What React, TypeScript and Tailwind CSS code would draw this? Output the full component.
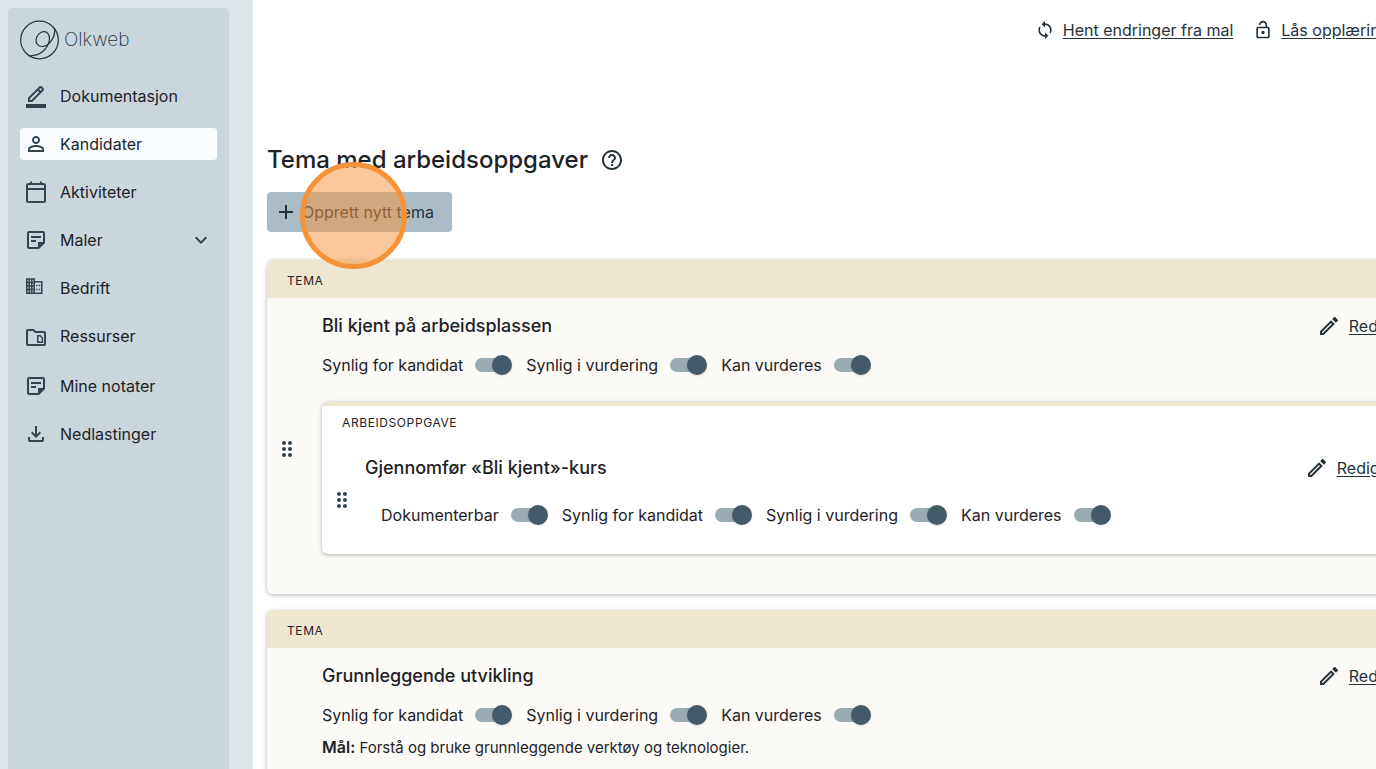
import React from 'react';
import {
    MdAdd,
    MdDragIndicator,
    MdExpandMore,
    MdHelpOutline,
    MdOutlineEdit,
    MdOutlineLockOpen,
    MdOutlineStickyNote2,
    MdPersonOutline,
    MdSync
} from 'react-icons/md';

interface IconProps {
    className?: string;
}

const BorderColorIcon: React.FC<IconProps> = ({ className }) => (
    <svg viewBox="0 -960 960 960" fill="currentColor" className={className}>
        <path d="M80 0v-160h800V0H80Zm160-320h56l312-311-29-29-28-28-311 312v56Zm-80 80v-170l448-447q11-11 25.500-17t30.500-6q16 0 31 6t27 18l55 56q12 11 17.500 26t5.500 31q0 15-5.500 29.500T777-687L330-240H160Zm504-448 56-56-56-56-56 56 56 56Z" />
    </svg>
);

const CalendarIcon: React.FC<IconProps> = ({ className }) => (
    <svg viewBox="0 0 24 24" fill="none" stroke="currentColor" strokeWidth="2" className={className}>
        <rect x="3" y="4" width="18" height="18" rx="1.5" />
        <path d="M3 9h18M7 1.500v3M17 1.500v3" />
    </svg>
);

const DownloadIcon: React.FC<IconProps> = ({ className }) => (
    <svg viewBox="0 -960 960 960" fill="currentColor" className={className}>
        <path d="M480-320 280-520l56-58 104 104v-326h80v326l104-104 56 58-200 200ZM240-160q-33 0-56.500-23.500T160-240v-120h80v120h480v-120h80v120q0 33-23.500 56.500T720-160H240Z" />
    </svg>
);

const FolderIcon: React.FC<IconProps> = ({ className }) => (
    <svg viewBox="0 0 24 24" fill="none" stroke="currentColor" className={className}>
        <path strokeWidth="2" d="M4 6h5.400l2 2H20a1 1 0 0 1 1 1v11a1 1 0 0 1-1 1H4a1 1 0 0 1-1-1V7a1 1 0 0 1 1-1z" />
        <path strokeWidth="1.500" d="M13.750 11.750h2.600l2 2.200v4.300h-4.600z" />
    </svg>
);

const BuildingIcon: React.FC<IconProps> = ({ className }) => (
    <svg viewBox="0 0 24 24" fill="none" stroke="currentColor" strokeWidth="1.500" className={className}>
        <path d="M2.750 3h7.500v14.250h-7.500zM2.750 6.500h7.500M2.750 10h7.500M2.750 13.500h7.500M5.250 3v14.250M7.750 3v14.250M10.250 5.750h7.500v11.500h-7.500" />
        <path d="M12 9.500h1.500M14.800 9.500h1.500M12 13.500h1.500M14.800 13.500h1.500" />
    </svg>
);

const Logo: React.FC = () => (
    <a href="#" aria-label="Olkweb" className="flex items-center gap-1 text-[#24323b]">
        <svg viewBox="0 0 40 40" fill="none" stroke="currentColor" strokeWidth="1.200" className="size-10">
            <circle cx="19.500" cy="20" r="18.800" />
            <path d="M34.500 8C36 17 29 26.500 22 26.500C18 26.500 15.700 23 16 20C16.500 15.500 20 11.700 24 11.700C27.500 11.700 29.800 15 29.500 19C28.500 28 21 36.500 8.500 35.700" />
        </svg>
        <span className="text-[19px] font-extralight">Olkweb</span>
    </a>
);

const mainItems = [
    { label: 'Dokumentasjon', icon: BorderColorIcon },
    { label: 'Kandidater', icon: MdPersonOutline, active: true },
    { label: 'Aktiviteter', icon: CalendarIcon },
    { label: 'Maler', icon: MdOutlineStickyNote2, expandable: true },
    { label: 'Bedrift', icon: BuildingIcon },
    { label: 'Ressurser', icon: FolderIcon }
];

const personalItems = [
    { label: 'Mine notater', icon: MdOutlineStickyNote2 },
    { label: 'Nedlastinger', icon: DownloadIcon }
];

interface NavItemProps {
    label: string;
    icon: React.ElementType;
    active?: boolean;
    expandable?: boolean;
}

const NavItem: React.FC<NavItemProps> = ({ label, icon: Icon, active, expandable }) => (
    <a href="#" className={`flex h-8 items-center rounded px-1 text-[#1d2226] ${active ? 'bg-[#f8fcff]' : ''}`}>
        <Icon className="size-6 text-[#33444f]" />
        <span className="ml-3 flex-1">{label}</span>
        {expandable && <MdExpandMore className="size-6 text-[#33444f]" />}
    </a>
);

const Sidebar: React.FC = () => (
    <aside className="w-[253px] shrink-0 bg-[#dce5ea] pl-2 pr-6 pt-2">
        <div className="h-full rounded-t bg-[#cbd6dc] px-3 pt-3">
            <Logo />
            <nav className="mt-5 flex flex-col gap-[18px]">
                <div className="flex flex-col gap-4">
                    {mainItems.map((item) => (
                        <NavItem key={item.label} {...item} />
                    ))}
                </div>
                <div className="flex flex-col gap-4">
                    {personalItems.map((item) => (
                        <NavItem key={item.label} {...item} />
                    ))}
                </div>
            </nav>
        </div>
    </aside>
);

const Toggle: React.FC<{ label: string }> = ({ label }) => (
    <label className="flex items-center gap-3 whitespace-nowrap">
        {label}
        <input
            type="checkbox"
            role="switch"
            defaultChecked
            className="flex h-5 w-[37px] shrink-0 appearance-none items-center before:h-[14px] before:w-[34px] before:shrink-0 before:rounded-full before:bg-[#9aabb2] after:-ml-[17px] after:size-5 after:shrink-0 after:rounded-full after:bg-[#455a68] after:shadow-sm"
        />
    </label>
);

const EditLink: React.FC = () => (
    <a href="#" className="flex shrink-0 items-center gap-2 text-[#24323b]">
        <MdOutlineEdit className="size-6" />
        <span className="underline underline-offset-2">Rediger</span>
    </a>
);

const DragHandle: React.FC<{ label: string }> = ({ label }) => (
    <button type="button" aria-label={label} className="flex w-10 shrink-0 items-center justify-center text-[#33444f]">
        <MdDragIndicator className="size-6" />
    </button>
);

interface ThemeCardProps {
    title: string;
    goal?: string;
    children?: React.ReactNode;
}

const ThemeCard: React.FC<ThemeCardProps> = ({ title, goal, children }) => (
    <section className="rounded-md bg-[#fcfaf6] shadow-[0_1px_4px_rgba(0,0,0,0.3)]">
        <div className="flex h-[38px] items-center rounded-t-md bg-[#ede6d1] px-5 pt-1 text-xs tracking-wider">TEMA</div>
        <div className="flex min-h-[296px]">
            <div className="flex pt-[6px]">
                <DragHandle label="Flytt tema" />
            </div>
            <div className="min-w-0 flex-1 pb-10 pl-[15px] pt-4">
                <div className="flex items-center justify-between pr-[23px]">
                    <h2 className="text-lg font-medium leading-6">{title}</h2>
                    <EditLink />
                </div>
                <div className="mt-[15px] flex gap-[14px]">
                    <Toggle label="Synlig for kandidat" />
                    <Toggle label="Synlig i vurdering" />
                    <Toggle label="Kan vurderes" />
                </div>
                {goal && (
                    <p className="mt-2 text-[15px] leading-6">
                        <strong className="text-base font-semibold">Mål:</strong> {goal}
                    </p>
                )}
                {children}
            </div>
        </div>
    </section>
);

const TaskCard: React.FC<{ title: string }> = ({ title }) => (
    <article className="mt-[25px] rounded-md border-t-4 border-[#ede6d1] bg-white shadow-[0_1px_4px_rgba(0,0,0,0.3)]">
        <div className="h-10 px-5 pt-[7px] text-xs leading-5 tracking-wider">ARBEIDSOPPGAVE</div>
        <div className="flex">
            <DragHandle label="Flytt arbeidsoppgave" />
            <div className="min-w-0 flex-1 pb-[27px] pl-[3px] pt-[10px]">
                <div className="flex items-center justify-between pr-[35px]">
                    <h3 className="text-lg font-medium leading-6">{title}</h3>
                    <EditLink />
                </div>
                <div className="mt-[23px] flex gap-[14px] pl-4">
                    <Toggle label="Dokumenterbar" />
                    <Toggle label="Synlig for kandidat" />
                    <Toggle label="Synlig i vurdering" />
                    <Toggle label="Kan vurderes" />
                </div>
            </div>
        </div>
    </article>
);

export default function App() {
    return (
        <div className="flex h-screen overflow-hidden bg-white font-['Inter','Liberation_Sans',sans-serif] text-base text-[#1d2226]">
            <Sidebar />
            <main className="min-w-0 flex-1 overflow-hidden pl-[14px]">
                <div className="-mr-[54px]">
                    <div className="flex justify-end gap-5 pt-[18px] text-[#24323b]">
                        <a href="#" className="flex items-center gap-2">
                            <MdSync className="size-5" />
                            <span className="underline underline-offset-2">Hent endringer fra mal</span>
                        </a>
                        <a href="#" className="flex items-center gap-2">
                            <MdOutlineLockOpen className="size-5" />
                            <span className="underline underline-offset-2">Lås opplæringsplan</span>
                        </a>
                    </div>
                    <div className="mt-[102px] flex items-center gap-3">
                        <h1 className="text-2xl font-medium">Tema med arbeidsoppgaver</h1>
                        <button type="button" aria-label="Hjelp" className="text-[#24323b]">
                            <MdHelpOutline className="size-6" />
                        </button>
                    </div>
                    <div className="relative mt-4 w-fit">
                        <button type="button" className="flex h-10 items-center gap-1 rounded bg-[#aabcc5] pl-[7px] pr-[18px] text-[#24323b]">
                            <MdAdd className="size-6" />
                            Opprett nytt tema
                        </button>
                        <div className="pointer-events-none absolute -top-[30px] left-[33px] size-[107px] rounded-full border-[5px] border-[#f79239] bg-[#f79239]/50" />
                    </div>
                    <div className="mt-7 flex flex-col gap-4">
                        <ThemeCard title="Bli kjent på arbeidsplassen">
                            <TaskCard title="Gjennomfør «Bli kjent»-kurs" />
                        </ThemeCard>
                        <ThemeCard
                            title="Grunnleggende utvikling"
                            goal="Forstå og bruke grunnleggende verktøy og teknologier."
                        />
                    </div>
                </div>
            </main>
        </div>
    );
}
